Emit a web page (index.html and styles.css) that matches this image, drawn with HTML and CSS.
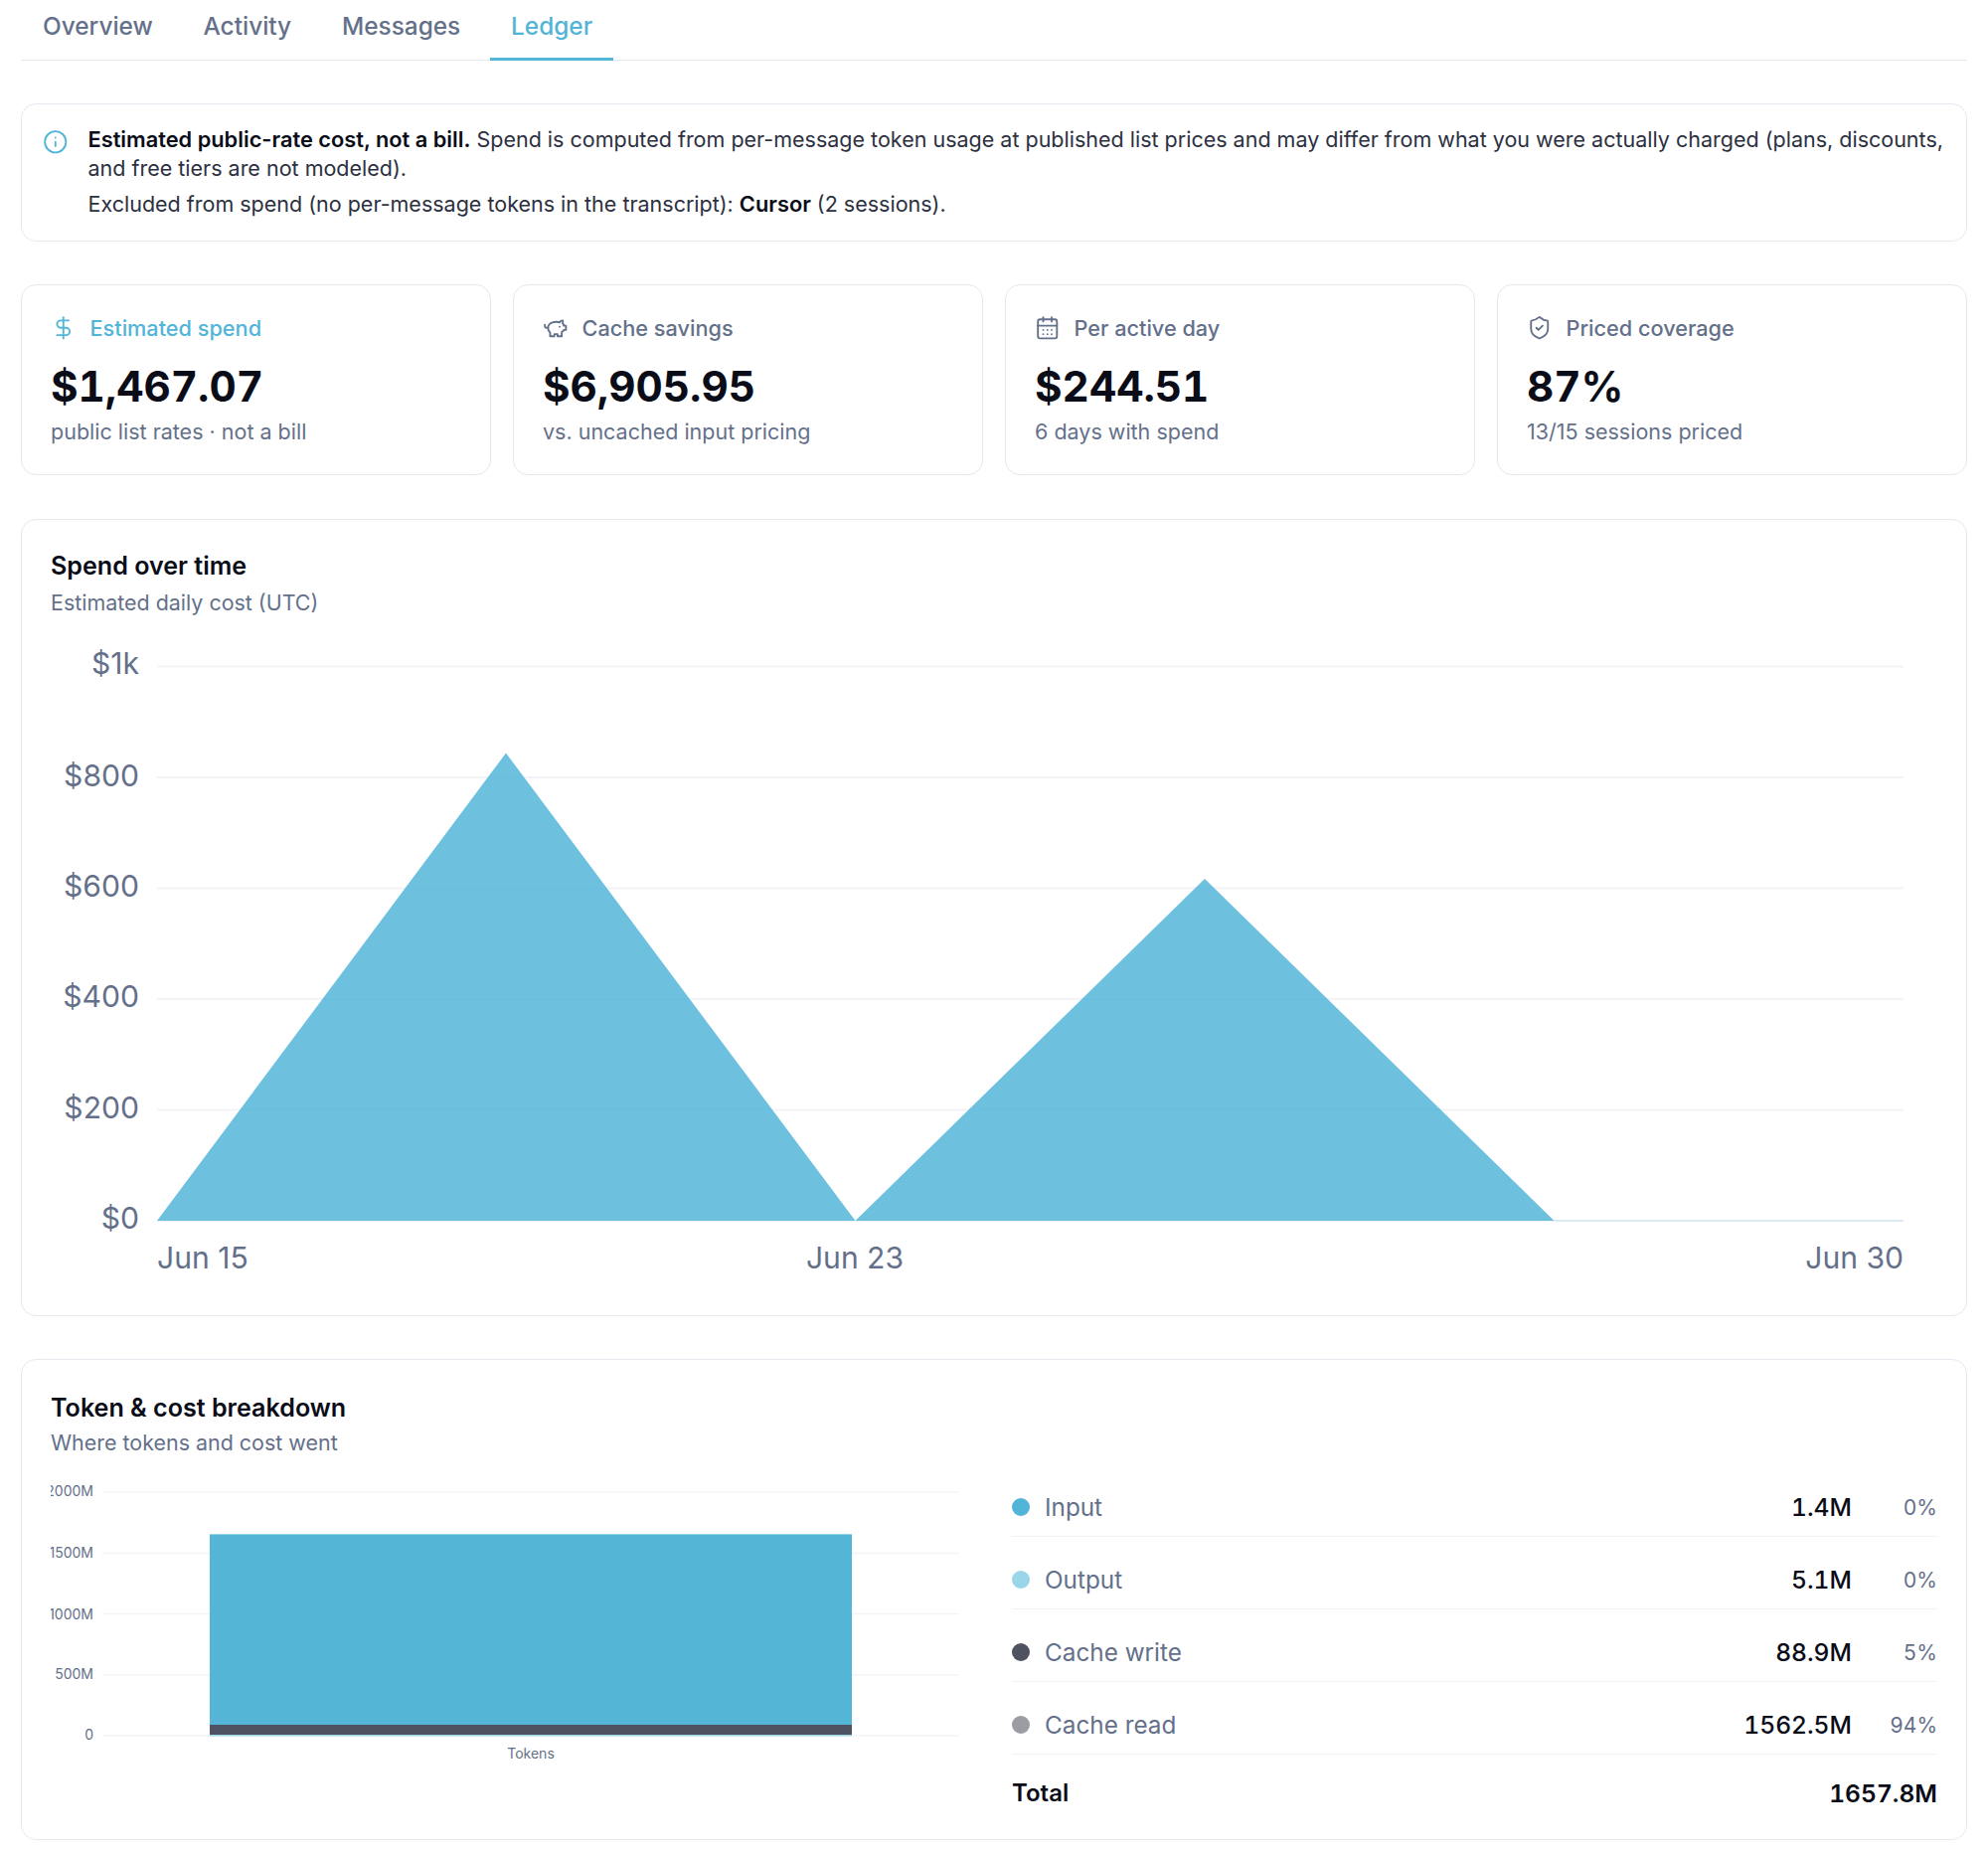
FILE: index.html

```html
<!DOCTYPE html>
<html lang="en">
<head>
    <meta charset="UTF-8">
    <meta name="viewport" content="width=device-width, initial-scale=1.0">
    <title>Ledger</title>
    <link rel="stylesheet" href="styles.css">
</head>
<body>
    <div class="page">
        <nav class="tabs">
            <a class="tab">Overview</a>
            <a class="tab">Activity</a>
            <a class="tab">Messages</a>
            <a class="tab active">Ledger</a>
        </nav>

        <section class="card notice">
            <svg class="icon notice-icon" viewBox="0 0 24 24"><circle cx="12" cy="12" r="10"/><path d="M12 16v-4"/><path d="M12 8h.01"/></svg>
            <div class="notice-text">
                <p><strong>Estimated public-rate cost, not a bill.</strong> Spend is computed from per-message token usage at published list prices and may differ from what you were actually charged (plans, discounts, and free tiers are not modeled).</p>
                <p class="notice-second">Excluded from spend (no per-message tokens in the transcript): <strong>Cursor</strong> (2 sessions).</p>
            </div>
        </section>

        <section class="kpis">
            <div class="card kpi">
                <div class="kpi-label accent">
                    <svg class="icon" viewBox="0 0 24 24"><line x1="12" x2="12" y1="2" y2="22"/><path d="M17 5H9.5a3.5 3.5 0 0 0 0 7h5a3.5 3.5 0 0 1 0 7H6"/></svg>
                    Estimated spend
                </div>
                <div class="kpi-value">$1,467.07</div>
                <div class="kpi-sub">public list rates · not a bill</div>
            </div>
            <div class="card kpi">
                <div class="kpi-label">
                    <svg class="icon" viewBox="0 0 24 24"><path d="M19 5c-1.5 0-2.8 1.4-3 2-3.5-1.5-11-.3-11 5 0 1.8 0 3 2 4.5V20h4v-2h3v2h4v-4c1-.5 1.7-1 2-2h2v-4h-2c0-1-.5-1.5-1-2V5z"/><path d="M2 9v1c0 1.1.9 2 2 2h1"/><path d="M16 11h.01"/></svg>
                    Cache savings
                </div>
                <div class="kpi-value">$6,905.95</div>
                <div class="kpi-sub">vs. uncached input pricing</div>
            </div>
            <div class="card kpi">
                <div class="kpi-label">
                    <svg class="icon" viewBox="0 0 24 24"><path d="M8 2v4"/><path d="M16 2v4"/><rect width="18" height="18" x="3" y="4" rx="2"/><path d="M3 10h18"/><path d="M8 14h.01"/><path d="M12 14h.01"/><path d="M16 14h.01"/><path d="M8 18h.01"/><path d="M12 18h.01"/><path d="M16 18h.01"/></svg>
                    Per active day
                </div>
                <div class="kpi-value">$244.51</div>
                <div class="kpi-sub">6 days with spend</div>
            </div>
            <div class="card kpi">
                <div class="kpi-label">
                    <svg class="icon" viewBox="0 0 24 24"><path d="M20 13c0 5-3.5 7.5-7.66 8.95a1 1 0 0 1-.67-.01C7.5 20.5 4 18 4 13V6a1 1 0 0 1 1-1c2 0 4.5-1.2 6.24-2.72a1.17 1.17 0 0 1 1.52 0C14.51 3.81 17 5 19 5a1 1 0 0 1 1 1z"/><path d="m9 12 2 2 4-4"/></svg>
                    Priced coverage
                </div>
                <div class="kpi-value">87%</div>
                <div class="kpi-sub">13/15 sessions priced</div>
            </div>
        </section>

        <section class="card panel">
            <h2 class="panel-title">Spend over time</h2>
            <div class="panel-sub">Estimated daily cost (UTC)</div>
            <svg class="spend-chart" viewBox="0 0 1898 653">
                <g class="grid-lines">
                    <line x1="107" x2="1864" y1="30.5" y2="30.5"/>
                    <line x1="107" x2="1864" y1="142" y2="142"/>
                    <line x1="107" x2="1864" y1="253.5" y2="253.5"/>
                    <line x1="107" x2="1864" y1="365" y2="365"/>
                    <line x1="107" x2="1864" y1="476.5" y2="476.5"/>
                    <line x1="107" x2="1864" y1="588" y2="588"/>
                </g>
                <path class="area" d="M107 588L458 117.5L809.5 588L1161 244L1512.5 588Z"/>
                <line class="area-base" x1="1512.5" x2="1864" y1="588" y2="588"/>
                <g class="tick-y">
                    <text x="89" y="38">$1k</text>
                    <text x="89" y="151">$800</text>
                    <text x="89" y="262">$600</text>
                    <text x="89" y="373">$400</text>
                    <text x="89" y="485">$200</text>
                    <text x="89" y="596">$0</text>
                </g>
                <g class="tick-x">
                    <text x="107" y="636">Jun 15</text>
                    <text class="mid" x="809" y="636">Jun 23</text>
                    <text class="end" x="1864" y="636">Jun 30</text>
                </g>
            </svg>
        </section>

        <section class="card panel breakdown">
            <h2 class="panel-title">Token &amp; cost breakdown</h2>
            <div class="panel-sub">Where tokens and cost went</div>
            <div class="breakdown-body">
                <svg class="bar-chart" viewBox="0 0 931 348">
                    <g class="grid-lines thin">
                        <line x1="52" x2="914" y1="28" y2="28"/>
                        <line x1="52" x2="914" y1="89.5" y2="89.5"/>
                        <line x1="52" x2="914" y1="150.5" y2="150.5"/>
                        <line x1="52" x2="914" y1="212" y2="212"/>
                        <line x1="52" x2="914" y1="273" y2="273"/>
                    </g>
                    <rect x="160" y="70" width="646" height="1.5" fill="#8fd2e8"/>
                    <rect x="160" y="71" width="646" height="191" fill="#55b5d6"/>
                    <rect x="160" y="262" width="646" height="10" fill="#4f5361"/>
                    <rect x="160" y="272" width="646" height="1.5" fill="#9fd6e8"/>
                    <g class="tick-small">
                        <text x="43" y="32">2000M</text>
                        <text x="43" y="94">1500M</text>
                        <text x="43" y="156">1000M</text>
                        <text x="43" y="216">500M</text>
                        <text x="43" y="277">0</text>
                    </g>
                    <text class="tick-name" x="483" y="296">Tokens</text>
                </svg>
                <div class="legend">
                    <div class="legend-row">
                        <span class="dot dot-input"></span>
                        <span class="legend-name">Input</span>
                        <span class="legend-value">1.4M</span>
                        <span class="legend-pct">0%</span>
                    </div>
                    <div class="legend-row">
                        <span class="dot dot-output"></span>
                        <span class="legend-name">Output</span>
                        <span class="legend-value">5.1M</span>
                        <span class="legend-pct">0%</span>
                    </div>
                    <div class="legend-row">
                        <span class="dot dot-write"></span>
                        <span class="legend-name">Cache write</span>
                        <span class="legend-value">88.9M</span>
                        <span class="legend-pct">5%</span>
                    </div>
                    <div class="legend-row">
                        <span class="dot dot-read"></span>
                        <span class="legend-name">Cache read</span>
                        <span class="legend-value">1562.5M</span>
                        <span class="legend-pct">94%</span>
                    </div>
                    <div class="legend-total">
                        <span>Total</span>
                        <span class="total-value">1657.8M</span>
                    </div>
                </div>
            </div>
        </section>
    </div>
</body>
</html>
```

FILE: styles.css

```css
* {
    box-sizing: border-box;
}
body {
    margin: 0;
    background-color: #fff;
    color: #0a0d18;
    font-family: 'Inter', 'Noto Sans', sans-serif;
}
.page {
    padding: 0 21px;
}
.tabs {
    display: flex;
    gap: 8.8px;
    height: 61px;
    padding-left: 1px;
    border-bottom: 1px solid #e6e8ef;
}
.tab {
    padding: 13px 21px 0;
    height: 61px;
    font-size: 24.4px;
    line-height: 26px;
    font-weight: 500;
    color: #64708a;
}
.tab.active {
    color: #52b5d7;
    border-bottom: 3px solid #52b5d7;
}
.card {
    background-color: #fff;
    border: 1px solid #e6e8ef;
    border-radius: 15px;
}
.icon {
    width: 25.5px;
    height: 25.5px;
    fill: none;
    stroke: currentColor;
    stroke-width: 1.75;
    stroke-linecap: round;
    stroke-linejoin: round;
    flex: none;
}
.notice {
    display: flex;
    gap: 20px;
    height: 139px;
    margin-top: 43px;
    padding: 21px 21px 0;
}
.notice-icon {
    margin-top: 4px;
    color: #52b5d7;
}
.notice-text {
    font-size: 21.5px;
    line-height: 29px;
    color: #2c3040;
}
.notice-text p {
    margin: 0;
}
.notice-text strong {
    font-size: 21.8px;
    font-weight: 600;
    color: #0a0d18;
}
.notice-text .notice-second {
    margin-top: 7px;
}
.kpis {
    display: grid;
    grid-template-columns: repeat(4, 1fr);
    gap: 22px;
    margin-top: 43px;
}
.kpi {
    height: 192px;
    padding: 30px 29px;
}
.kpi-label {
    display: flex;
    align-items: center;
    gap: 14px;
    height: 26px;
    font-size: 21.7px;
    font-weight: 500;
    color: #64708a;
}
.kpi-label.accent {
    color: #52b5d7;
}
.kpi-value {
    margin-top: 23px;
    font-size: 42.2px;
    line-height: 46px;
    font-weight: 700;
    font-variant-numeric: tabular-nums;
    color: #0a0d18;
}
.kpi-sub {
    margin-top: 9px;
    font-size: 21.5px;
    line-height: 26px;
    color: #64708a;
}
.panel {
    height: 802px;
    margin-top: 44px;
    padding: 28px 29px 0;
}
.panel-title {
    margin: 0;
    font-size: 25.1px;
    line-height: 36px;
    font-weight: 600;
    color: #0a0d18;
}
.panel-sub {
    margin-top: 6px;
    font-size: 21.45px;
    line-height: 26px;
    color: #64708a;
}
.spend-chart {
    display: block;
    width: 1898px;
    height: 653px;
    margin-top: 21px;
}
.grid-lines line {
    stroke: #f3f4f8;
    stroke-width: 2;
}
.grid-lines.thin line {
    stroke-width: 1.5;
}
.area {
    fill: #4fb5d8;
    fill-opacity: 0.83;
}
.area-base {
    stroke: #dcecf4;
    stroke-width: 2;
}
.tick-y text,
.tick-x text {
    font-size: 30.1px;
    fill: #64708a;
}
.tick-y text {
    text-anchor: end;
}
.tick-x .mid {
    text-anchor: middle;
}
.tick-x .end {
    text-anchor: end;
}
.breakdown {
    height: 484px;
    margin-top: 43px;
    padding-top: 30px;
}
.breakdown .panel-sub {
    margin-top: 4px;
}
.breakdown-body {
    display: grid;
    grid-template-columns: 931px 931px;
    gap: 36px;
    margin-top: 9px;
}
.bar-chart {
    display: block;
    width: 931px;
    height: 348px;
}
.tick-small text {
    font-size: 14px;
    fill: #64708a;
    text-anchor: end;
}
.tick-name {
    font-size: 14px;
    fill: #64708a;
    text-anchor: middle;
}
.legend-row {
    display: flex;
    align-items: center;
    height: 73px;
    padding-top: 14px;
    border-bottom: 1px solid #eff1f5;
}
.dot {
    width: 18px;
    height: 18px;
    border-radius: 50%;
    margin-right: 15px;
}
.dot-input {
    background-color: #52b5d7;
}
.dot-output {
    background-color: #99d6ea;
}
.dot-write {
    background-color: #4f5361;
}
.dot-read {
    background-color: #9b9ca4;
}
.legend-name {
    flex: 1;
    font-size: 24.3px;
    color: #64708a;
}
.legend-value {
    font-size: 24.6px;
    font-weight: 500;
    font-variant-numeric: tabular-nums;
    color: #0a0d18;
}
.legend-pct {
    width: 86px;
    padding-top: 1px;
    text-align: right;
    font-size: 21px;
    font-variant-numeric: tabular-nums;
    color: #64708a;
}
.legend-total {
    display: flex;
    justify-content: space-between;
    padding-top: 21px;
    font-size: 24px;
    line-height: 36px;
    font-weight: 600;
    color: #0a0d18;
}
.total-value {
    font-size: 24.6px;
    font-variant-numeric: tabular-nums;
}
```
